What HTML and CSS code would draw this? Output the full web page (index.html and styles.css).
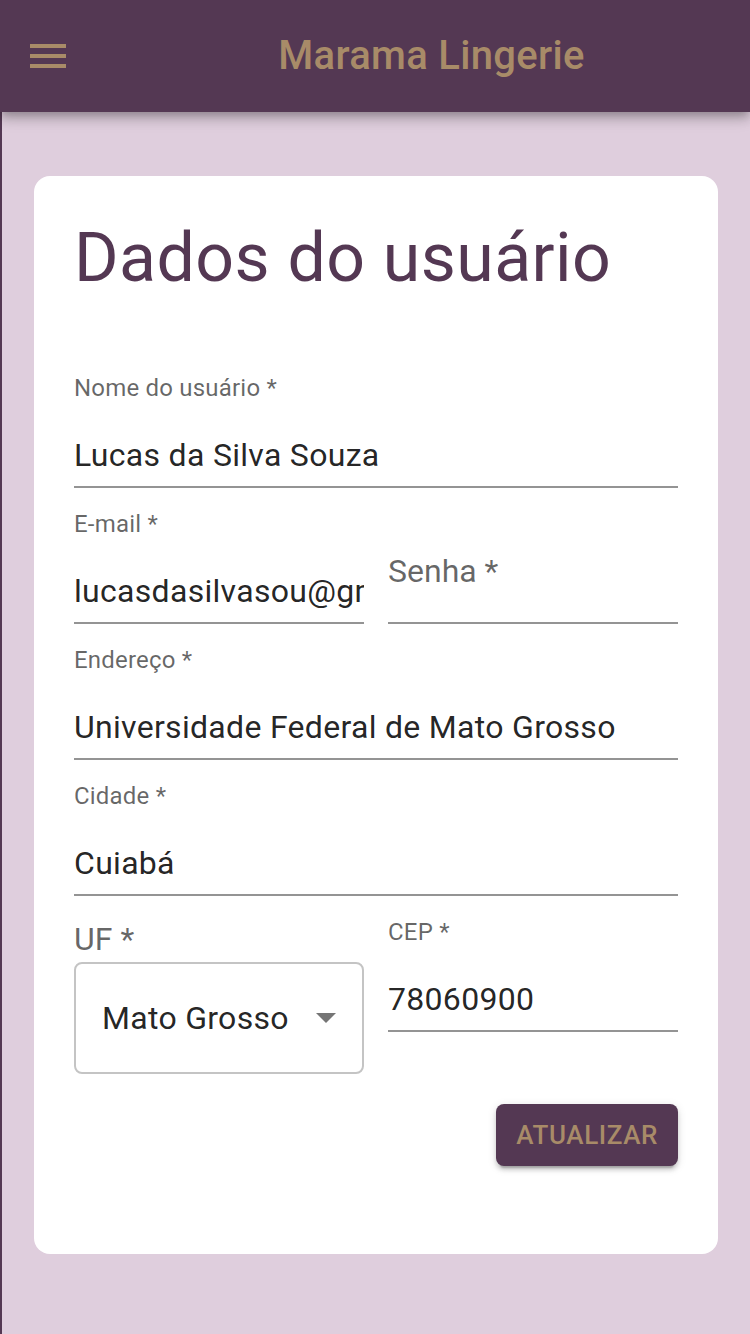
FILE: index.html
```html
<!DOCTYPE html>
<html lang="pt-BR">
<head>
<meta charset="utf-8">
<title>Marama Lingerie</title>
<link rel="stylesheet" href="styles.css">
</head>
<body>
<header class="appbar">
  <button class="menu-btn" aria-label="menu">
    <svg viewBox="0 0 24 24" width="48" height="48"><path d="M3 18h18v-2H3v2zm0-5h18v-2H3v2zm0-7v2h18V6H3z" fill="#a88b68"/></svg>
  </button>
  <h1 class="brand">Marama Lingerie</h1>
</header>
<main class="page">
  <section class="card">
    <h2 class="title">Dados do usuário</h2>
    <form class="form">
      <div class="field">
        <label class="label">Nome do usuário *</label>
        <input class="input" type="text" value="Lucas da Silva Souza" readonly>
      </div>
      <div class="row">
        <div class="field">
          <label class="label">E-mail *</label>
          <input class="input" type="text" value="lucasdasilvasou@gmail.com" readonly>
        </div>
        <div class="field field-empty">
          <label class="label-big">Senha *</label>
          <input class="input" type="password" value="" readonly>
        </div>
      </div>
      <div class="field">
        <label class="label">Endereço *</label>
        <input class="input" type="text" value="Universidade Federal de Mato Grosso" readonly>
      </div>
      <div class="field">
        <label class="label">Cidade *</label>
        <input class="input" type="text" value="Cuiabá" readonly>
      </div>
      <div class="row">
        <div class="select-field">
          <span class="select-label">UF *</span>
          <div class="select">
            <span class="select-value">Mato Grosso</span>
            <svg class="arrow" viewBox="0 0 20 10" width="20" height="10"><path d="M0 0l10 10 10-10z" fill="#757575"/></svg>
          </div>
        </div>
        <div class="field">
          <label class="label">CEP *</label>
          <input class="input" type="text" value="78060900" readonly>
        </div>
      </div>
      <div class="actions">
        <button type="button" class="btn">ATUALIZAR</button>
      </div>
    </form>
  </section>
</main>
</body>
</html>
```
FILE: styles.css
```css
* { box-sizing: border-box; }
html, body {
  margin: 0;
  padding: 0;
}
body {
  font-family: Roboto, "Liberation Sans", Arial, sans-serif;
  background: #dfcedd;
  width: 750px;
  min-height: 1334px;
}
.appbar {
  position: relative;
  z-index: 2;
  height: 112px;
  background: #543853;
  display: flex;
  align-items: center;
  padding-left: 24px;
  box-shadow: 0 4px 8px -2px rgba(0,0,0,0.2), 0 8px 10px 0 rgba(0,0,0,0.14), 0 2px 20px 0 rgba(0,0,0,0.12);
}
.menu-btn {
  width: 48px;
  height: 48px;
  padding: 0;
  border: 0;
  background: none;
  display: block;
}
.menu-btn svg { display: block; }
.brand {
  flex: 1;
  margin: 0 0 0 41px;
  text-align: center;
  color: #a88b68;
  font-size: 40px;
  font-weight: 500;
  line-height: 48px;
  letter-spacing: 0.3px;
}
.page {
  border-left: 2px solid #543853;
  min-height: 1222px;
  padding: 64px 32px 80px 32px;
}
.card {
  background: #fff;
  border-radius: 16px;
  padding: 40px 40px 40px 40px;
}
.title {
  margin: 0;
  font-size: 68px;
  font-weight: 400;
  line-height: 84px;
  color: #543853;
  letter-spacing: 0.45px;
}
.form {
  margin-top: 76px;
  display: flex;
  flex-direction: column;
  gap: 24px;
}
.row {
  display: grid;
  grid-template-columns: 1fr 1fr;
  column-gap: 24px;
  align-items: start;
}
.field {
  position: relative;
  display: flex;
  flex-direction: column;
  height: 112px;
  min-width: 0;
}
.label {
  font-size: 24px;
  line-height: 24px;
  height: 24px;
  color: rgba(0,0,0,0.6);
  white-space: nowrap;
  letter-spacing: 0.2px;
}
.input {
  margin-top: 36px;
  width: 100%;
  height: 52px;
  padding: 0 0 12px 0;
  border: 0;
  border-bottom: 2px solid #949494;
  outline: none;
  background: transparent;
  font-family: inherit;
  font-size: 32px;
  line-height: 38px;
  color: rgba(0,0,0,0.87);
  letter-spacing: 0.3px;
}
.field-empty .input { margin-top: 60px; }
.label-big {
  position: absolute;
  left: 0;
  top: 43px;
  font-size: 32px;
  line-height: 32px;
  color: rgba(0,0,0,0.6);
}
.select-field {
  display: flex;
  flex-direction: column;
}
.select-label {
  margin-top: 3px;
  font-size: 32px;
  line-height: 32px;
  color: rgba(0,0,0,0.6);
}
.select {
  margin-top: 7px;
  height: 112px;
  border: 2px solid #c4c4c4;
  border-radius: 8px;
  display: flex;
  align-items: center;
  justify-content: space-between;
  padding: 0 26px 0 26px;
}
.select-value {
  font-size: 32px;
  line-height: 38px;
  color: rgba(0,0,0,0.87);
  letter-spacing: 0.3px;
}
.arrow { display: block; }
.actions {
  margin-top: 6px;
  margin-bottom: 48px;
  display: flex;
  justify-content: flex-end;
}
.btn {
  height: 62px;
  padding: 0 20px;
  border: 0;
  border-radius: 8px;
  background: #543853;
  color: #a88b68;
  font-family: inherit;
  font-size: 26px;
  font-weight: 500;
  letter-spacing: 0.6px;
  box-shadow: 0 6px 2px -4px rgba(0,0,0,0.2), 0 4px 4px 0 rgba(0,0,0,0.14), 0 2px 10px 0 rgba(0,0,0,0.12);
}
```
